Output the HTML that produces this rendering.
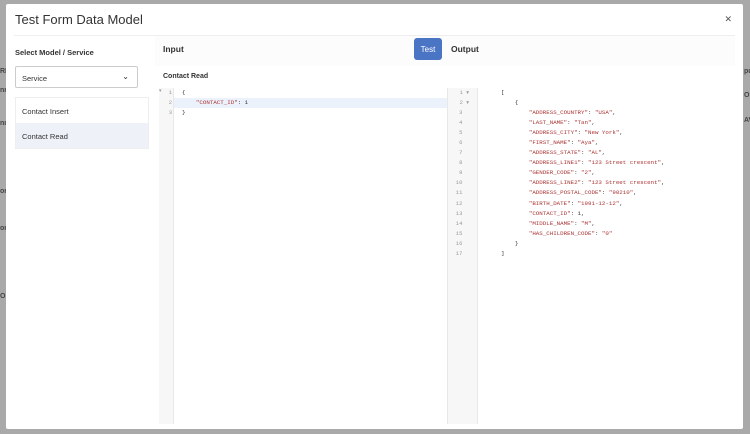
<!DOCTYPE html>
<html><head><style>
*{box-sizing:border-box;margin:0;padding:0}
body{width:750px;height:434px;background:#a9a9a9;font-family:"Liberation Sans",sans-serif;position:relative;overflow:hidden}
.bgt{position:absolute;left:0;font-size:7px;color:#444;font-weight:bold}
.modal{position:absolute;left:6px;top:4px;width:737px;height:425px;background:#fff;border-radius:2px}
.title{position:absolute;left:9px;top:8px;font-size:13px;color:#333}
.close{position:absolute;right:11px;top:10px;font-size:9px;color:#555}
.hr{position:absolute;left:8px;right:8px;top:31px;height:1px;background:#eee}
.sel{position:absolute;left:9px;top:44px;font-size:7.5px;font-weight:bold;color:#333}
.drop{position:absolute;left:9px;top:62px;width:123px;height:22px;border:1px solid #ccc;border-radius:2px;font-size:7.5px;color:#333;padding:7px 6px}
.drop span{position:absolute;right:8px;top:5px;font-size:8px}
.list{position:absolute;left:9px;top:93px;width:134px;height:52px;border:1px solid #eee;font-size:7.5px;color:#333}
.list div{height:25px;padding:9px 6px}
.list .a{background:#eef1f8}
.hd{position:absolute;top:40px;font-size:8.5px;font-weight:bold;color:#333}
.btn{position:absolute;left:408px;top:34px;width:28px;height:22px;background:#4a74c4;border-radius:3px;color:#fff;font-size:8px;display:flex;align-items:center;justify-content:center}
.cr{position:absolute;left:157px;top:69px;font-size:7px;font-weight:bold;color:#333}
.g{position:absolute;background:#f7f7f7;border-right:1px solid #e8e8e8}
.code{position:absolute;font-family:"Liberation Mono",monospace;font-size:5.8px;line-height:10.05px;white-space:pre;color:#333}
.code b{font-weight:normal;color:#a33}
.ln{position:absolute;font-family:"Liberation Mono",monospace;font-size:5.5px;line-height:10.05px;color:#999;white-space:pre;text-align:right}
</style></head><body>
<div class="bgt" style="top:68px">RI</div>
<div class="bgt" style="top:87px">nn</div>
<div class="bgt" style="top:120px">nı</div>
<div class="bgt" style="top:188px">or</div>
<div class="bgt" style="top:225px">or</div>
<div class="bgt" style="top:293px">O</div>
<div class="bgt" style="left:744px;top:68px">pu</div>
<div class="bgt" style="left:744px;top:92px">OL</div>
<div class="bgt" style="left:744px;top:117px">AV</div>
<div class="modal">
<div class="title">Test Form Data Model</div>
<div class="close">✕</div>
<div class="hr"></div>
<div class="sel">Select Model / Service</div>
<div class="drop">Service<span>⌄</span></div>
<div class="list"><div>Contact Insert</div><div class="a">Contact Read</div></div>
<div style="position:absolute;left:149px;top:32px;width:580px;height:30px;background:#fcfcfc"></div>
<div class="hd" style="left:157px">Input</div>
<div class="btn">Test</div>
<div class="hd" style="left:445px">Output</div>
<div class="cr">Contact Read</div>
<div class="g" style="left:153px;top:84px;width:15px;height:336px"></div>
<div style="position:absolute;left:168px;top:94px;width:273px;height:10px;background:#ecf2fb"></div>
<div class="ln" style="left:153px;top:84px;width:13px">1
2
3</div>
<div style="position:absolute;left:153px;top:84px;font-size:5px;color:#999">▾</div>
<div class="code" style="left:176px;top:84px">{
    <b>"CONTACT_ID"</b>: 1
}</div>
<div class="g" style="left:441px;top:84px;width:31px;height:336px;border-left:1px solid #e8e8e8"></div>
<div class="ln" style="left:441px;top:84px;width:22px">1 ▾
2 ▾
3  
4  
5  
6  
7  
8  
9  
10  
11  
12  
13  
14  
15  
16  
17  </div>
<div class="code" style="left:495px;top:84px">[
    {
        <b>"ADDRESS_COUNTRY"</b>: <b>"USA"</b>,
        <b>"LAST_NAME"</b>: <b>"Tan"</b>,
        <b>"ADDRESS_CITY"</b>: <b>"New York"</b>,
        <b>"FIRST_NAME"</b>: <b>"Aya"</b>,
        <b>"ADDRESS_STATE"</b>: <b>"AL"</b>,
        <b>"ADDRESS_LINE1"</b>: <b>"123 Street crescent"</b>,
        <b>"GENDER_CODE"</b>: <b>"2"</b>,
        <b>"ADDRESS_LINE2"</b>: <b>"123 Street crescent"</b>,
        <b>"ADDRESS_POSTAL_CODE"</b>: <b>"90210"</b>,
        <b>"BIRTH_DATE"</b>: <b>"1991-12-12"</b>,
        <b>"CONTACT_ID"</b>: 1,
        <b>"MIDDLE_NAME"</b>: <b>"M"</b>,
        <b>"HAS_CHILDREN_CODE"</b>: <b>"0"</b>
    }
]</div>
</div>
</body></html>
